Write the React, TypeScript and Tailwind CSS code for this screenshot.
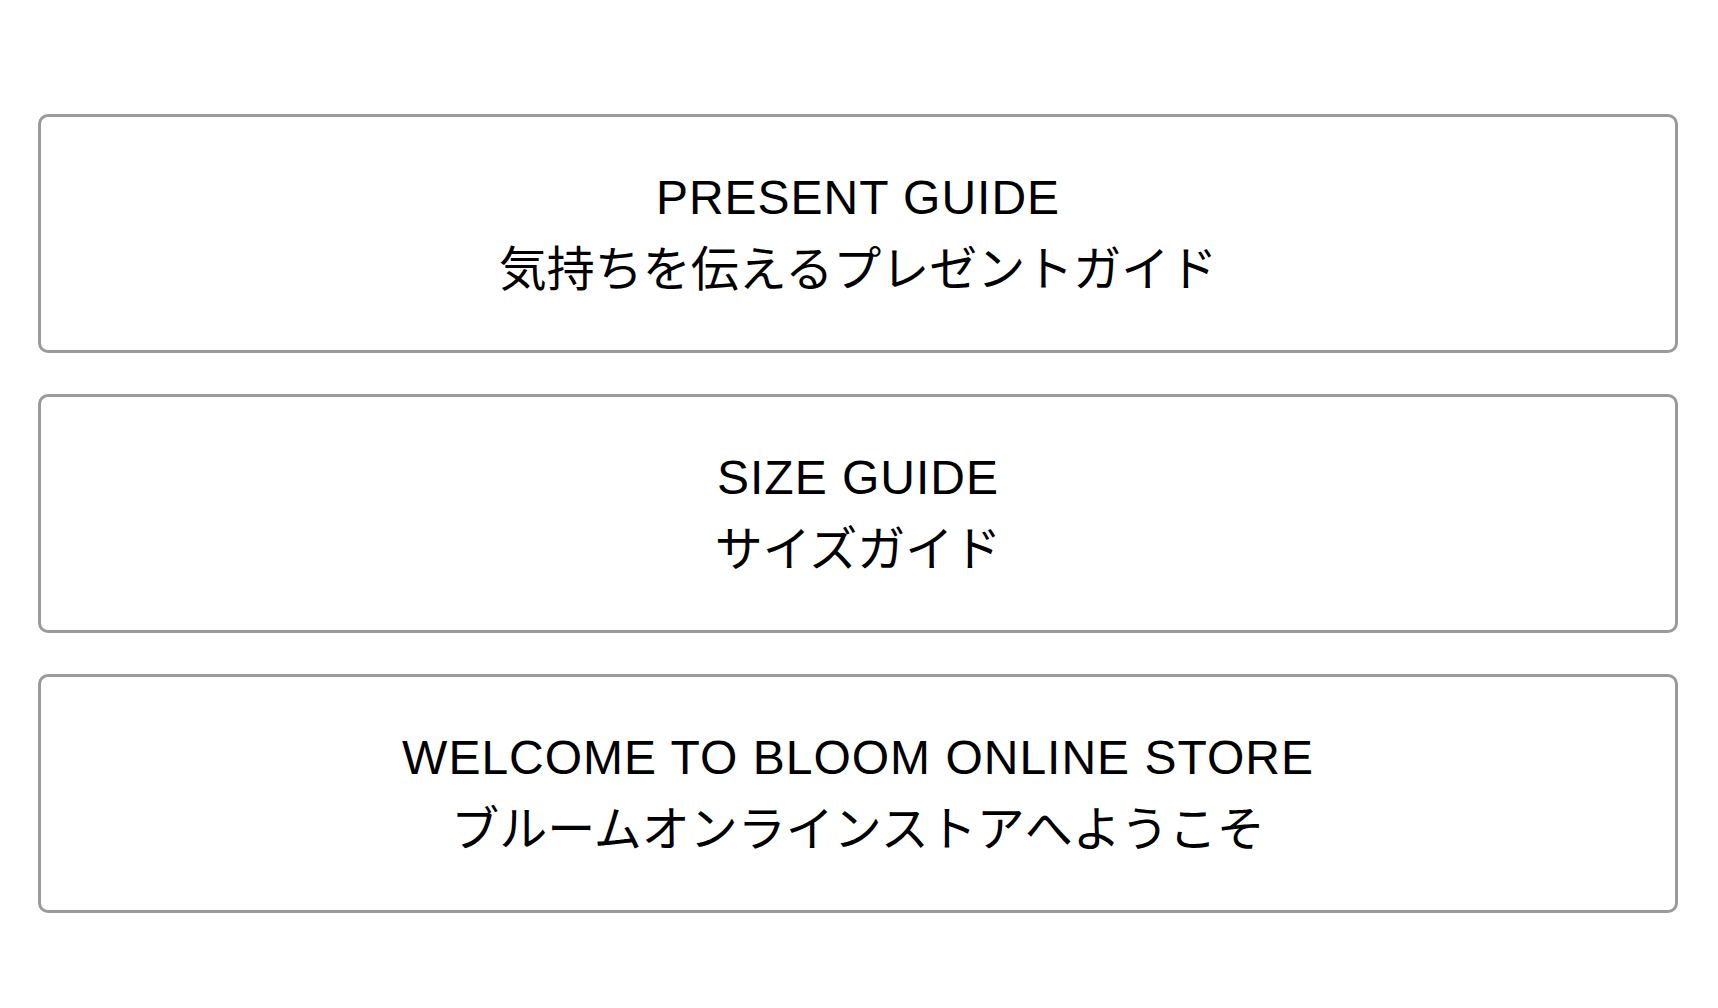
const guides = [
  { en: "PRESENT GUIDE", ja: "気持ちを伝えるプレゼントガイド" },
  { en: "SIZE GUIDE", ja: "サイズガイド" },
  { en: "WELCOME TO BLOOM ONLINE STORE", ja: "ブルームオンラインストアへようこそ" },
];

export default function App() {
  return (
    <div
      className="min-h-screen bg-white pt-[114px] pl-[38px] pr-[40px]"
      style={{ fontFamily: "'Liberation Sans', 'Noto Sans CJK JP', sans-serif" }}
    >
      <div className="flex flex-col gap-[41px]">
        {guides.map((g) => (
          <a
            key={g.en}
            href="#"
            className="flex h-[239px] flex-col items-center justify-center rounded-[10px] border-[3px] border-[#9a9a9a] text-center text-[48px] leading-[72px] text-black"
          >
            <span className="tracking-[1px]">{g.en}</span>
            <span>{g.ja}</span>
          </a>
        ))}
      </div>
    </div>
  );
}
